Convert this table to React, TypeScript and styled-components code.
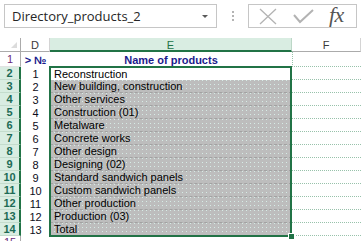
import React from 'react';
import styled, { createGlobalStyle, css } from 'styled-components';

const GREEN = '#217346';
const NAVY = '#1a1a8c';

const GlobalStyle = createGlobalStyle`
  html, body {
    margin: 0;
    padding: 0;
    background: #fff;
    overflow: hidden;
  }
  body {
    font-family: "Liberation Sans", Arial, sans-serif;
  }
`;

const Page = styled.div`
  width: 361px;
  height: 241px;
  overflow: hidden;
  background: #fff;
`;

const Toolbar = styled.div`
  height: 38px;
  display: flex;
  align-items: flex-start;
  padding: 4px 0 0 4px;
  box-sizing: border-box;
`;

const NameBox = styled.div`
  width: 213px;
  height: 24px;
  box-sizing: border-box;
  border: 1px solid #c6c6c6;
  display: flex;
  align-items: center;
  justify-content: space-between;
  padding: 0 8px 0 7px;
  font-family: "Open Sans", "Noto Sans", sans-serif;
  font-size: 13px;
  color: #262626;
`;

const DropArrow = styled.span`
  width: 0;
  height: 0;
  border-left: 3px solid transparent;
  border-right: 3px solid transparent;
  border-top: 3px solid #5a5a5a;
`;

const Grip = styled.div`
  width: 31px;
  height: 24px;
  display: flex;
  flex-direction: column;
  align-items: center;
  justify-content: center;
  gap: 2px;

  span {
    width: 2px;
    height: 2px;
    background: #b4b4b4;
  }
`;

const FormulaButtons = styled.div`
  width: 109px;
  height: 24px;
  box-sizing: border-box;
  border: 1px solid #c6c6c6;
  display: flex;
  align-items: center;
  padding: 0 0 0 9px;
  gap: 15px;
`;

const Fx = styled.span`
  font-family: "Liberation Serif", "Times New Roman", serif;
  font-style: italic;
  font-size: 22px;
  color: #555;
  line-height: 1;
  margin-top: -2px;
  letter-spacing: -0.5px;
`;

const Sheet = styled.div`
  position: relative;
  display: grid;
  grid-template-columns: 21px 29px 242px 69px;
  grid-template-rows: 14px 15px repeat(14, 13px);
  font-size: 11px;
`;

const Corner = styled.div`
  box-sizing: border-box;
  border-right: 1px solid #ababab;
  border-bottom: 1px solid #ababab;
  position: relative;

  &::after {
    content: '';
    position: absolute;
    right: 3px;
    bottom: 3px;
    width: 0;
    height: 0;
    border-left: 6px solid transparent;
    border-bottom: 6px solid #dcdcdc;
  }
`;

const ColHeader = styled.div<{ $selected?: boolean }>`
  box-sizing: border-box;
  display: flex;
  align-items: center;
  justify-content: center;
  border-right: 1px solid #d4d4d4;
  border-bottom: 1px solid #ababab;
  color: #3a3a3a;
  padding-top: 1px;
  ${({ $selected }) =>
    $selected &&
    css`
      background: #d9ede2;
      color: ${GREEN};
      border-bottom: 2px solid ${GREEN};
      border-right-color: #bcd7c7;
    `}
`;

const RowHeader = styled.div<{ $selected?: boolean }>`
  box-sizing: border-box;
  display: flex;
  align-items: center;
  justify-content: center;
  border-right: 1px solid #ababab;
  border-bottom: 1px solid #e2e2e2;
  color: #6a2a7a;
  ${({ $selected }) =>
    $selected &&
    css`
      background: #d9ede2;
      color: #1d6b55;
      font-weight: bold;
      border-right: 2px solid ${GREEN};
      border-bottom-color: #c4dccd;
    `}
`;

const NumCell = styled.div<{ $head?: boolean }>`
  box-sizing: border-box;
  display: flex;
  align-items: center;
  justify-content: center;
  color: #0c0c20;
  ${({ $head }) =>
    $head &&
    css`
      color: ${NAVY};
      font-weight: bold;
    `}
`;

const NameCell = styled.div<{ $variant: 'head' | 'active' | 'range' | 'blank' }>`
  box-sizing: border-box;
  display: flex;
  align-items: center;
  padding-left: 4px;
  color: #000;
  white-space: nowrap;
  overflow: hidden;
  position: relative;
  ${({ $variant }) =>
    $variant === 'head' &&
    css`
      justify-content: center;
      padding-left: 0;
      color: ${NAVY};
      font-weight: bold;
    `}
  ${({ $variant }) =>
    $variant === 'range' &&
    css`
      background: #bdbdbd;
      border-bottom: 1px dashed #a2a2a2;

      &::before {
        content: '';
        position: absolute;
        inset: 0;
        background: repeating-linear-gradient(90deg, #d6ebe6 0 1px, transparent 1px 4px);
        -webkit-mask-image: repeating-linear-gradient(180deg, #000 0 1px, transparent 1px 4px);
        mask-image: repeating-linear-gradient(180deg, #000 0 1px, transparent 1px 4px);
      }
    `}

  span {
    position: relative;
  }
`;

const EmptyCell = styled.div<{ $first?: boolean }>`
  box-sizing: border-box;
  border-bottom: 1px dotted #98c2ab;
  ${({ $first }) =>
    $first &&
    css`
      border-left: 1px dotted #98c2ab;
    `}
`;

const Selection = styled.div`
  position: absolute;
  left: 49px;
  top: 28px;
  width: 243px;
  height: 171px;
  box-sizing: border-box;
  border: 2px solid ${GREEN};
  pointer-events: none;
`;

const FillHandle = styled.div`
  position: absolute;
  right: -5px;
  bottom: -5px;
  width: 5px;
  height: 5px;
  background: ${GREEN};
  border: 1px solid #fff;
`;

const products = [
  'Reconstruction',
  'New building, construction',
  'Other services',
  'Construction (01)',
  'Metalware',
  'Concrete works',
  'Other design',
  'Designing (02)',
  'Standard sandwich panels',
  'Custom sandwich panels',
  'Other production',
  'Production (03)',
  'Total',
];

const CloseIcon = () => (
  <svg width="20" height="17" viewBox="0 0 20 17">
    <path d="M2 1 L18 16 M18 1 L2 16" stroke="#b3b3b3" strokeWidth="1.3" fill="none" />
  </svg>
);

const CheckIcon = () => (
  <svg width="21" height="15" viewBox="0 0 21 15">
    <path d="M1 6 L7 13 L20 1" stroke="#b3b3b3" strokeWidth="2" fill="none" />
  </svg>
);

export default function App() {
  return (
    <Page>
      <GlobalStyle />
      <Toolbar>
        <NameBox>
          <span>Directory_products_2</span>
          <DropArrow />
        </NameBox>
        <Grip>
          <span />
          <span />
          <span />
        </Grip>
        <FormulaButtons>
          <CloseIcon />
          <CheckIcon />
          <Fx>fx</Fx>
        </FormulaButtons>
      </Toolbar>
      <Sheet>
        <Corner />
        <ColHeader>D</ColHeader>
        <ColHeader $selected>E</ColHeader>
        <ColHeader>F</ColHeader>

        <RowHeader>1</RowHeader>
        <NumCell $head>&gt; №</NumCell>
        <NameCell $variant="head">Name of products</NameCell>
        <EmptyCell $first />

        {products.map((name, i) => (
          <React.Fragment key={name}>
            <RowHeader $selected>{i + 2}</RowHeader>
            <NumCell>{i + 1}</NumCell>
            <NameCell $variant={i === 0 ? 'active' : 'range'}>
              <span>{name}</span>
            </NameCell>
            <EmptyCell />
          </React.Fragment>
        ))}

        <RowHeader>15</RowHeader>
        <NumCell />
        <NameCell $variant="blank" />
        <EmptyCell />

        <Selection>
          <FillHandle />
        </Selection>
      </Sheet>
    </Page>
  );
}
